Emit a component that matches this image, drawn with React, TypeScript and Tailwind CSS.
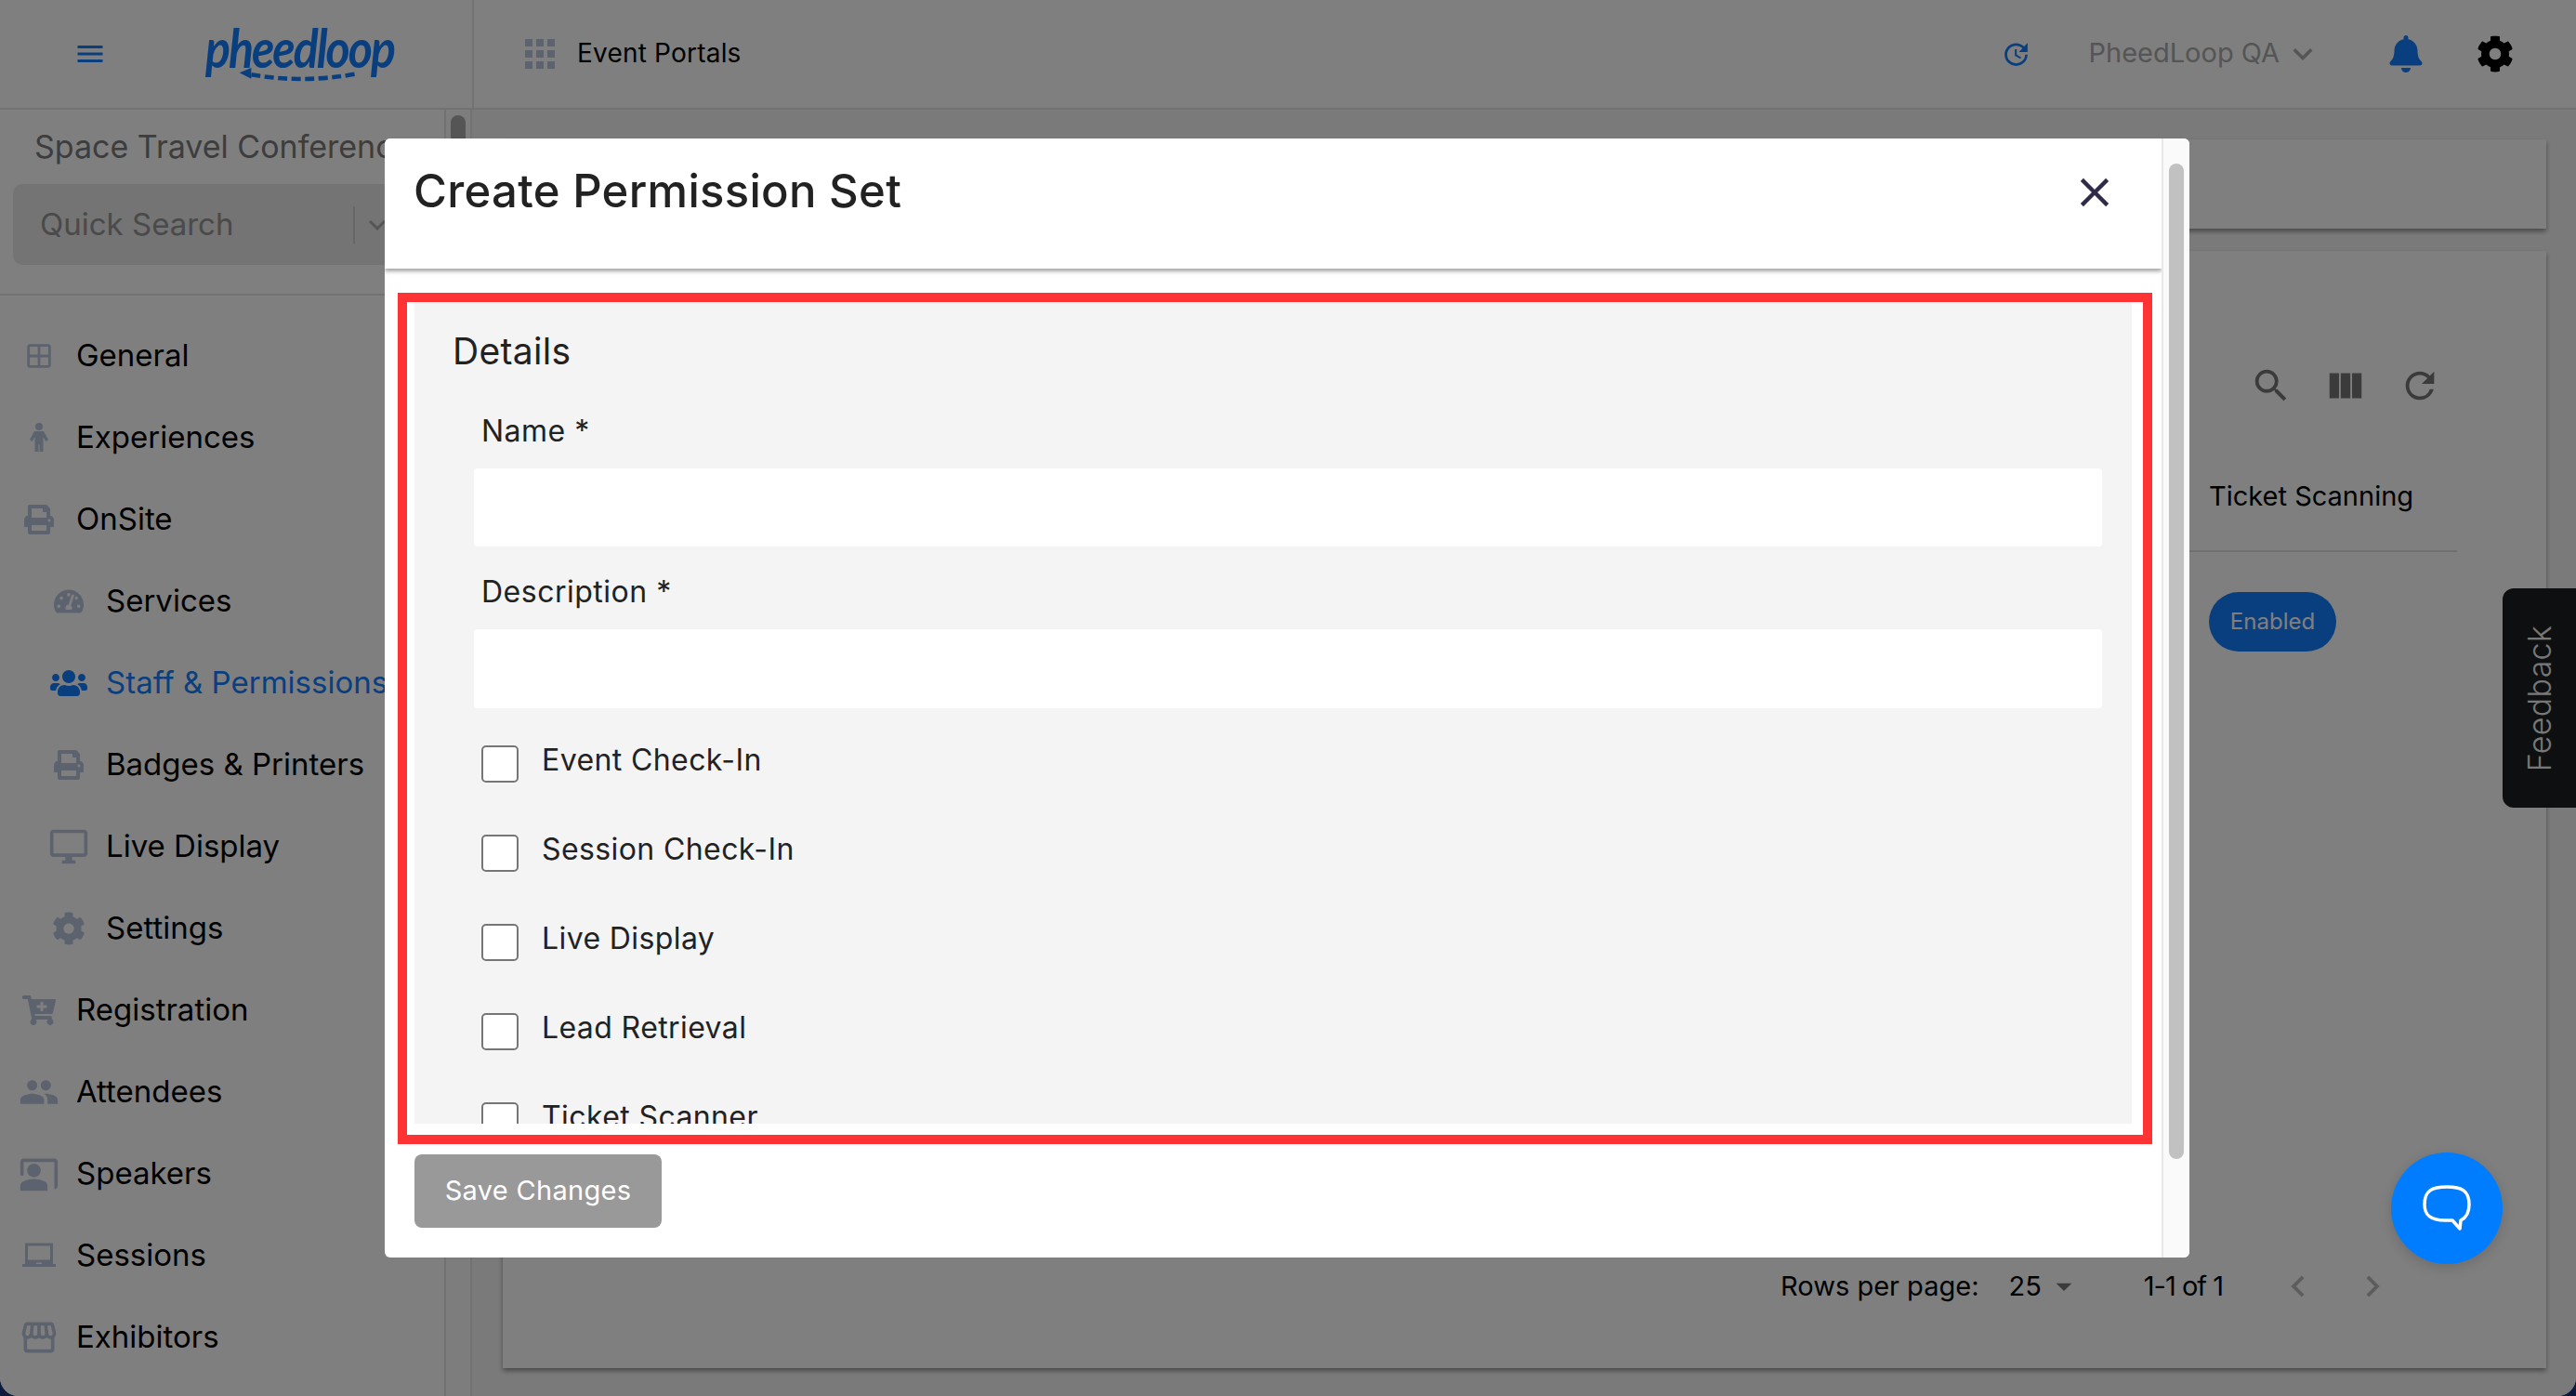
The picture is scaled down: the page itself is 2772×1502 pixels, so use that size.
import type { ReactNode } from 'react'
import { FaBell, FaCartPlus, FaCog, FaPrint, FaTachometerAlt, FaUsers } from 'react-icons/fa'
import {
  MdApps,
  MdArrowDropDown,
  MdChevronLeft,
  MdChevronRight,
  MdClose,
  MdCoPresent,
  MdKeyboardArrowDown,
  MdMenu,
  MdOutlineDesktopWindows,
  MdOutlineLaptopChromebook,
  MdOutlineStorefront,
  MdOutlineWindow,
  MdPeople,
  MdRefresh,
  MdSearch,
  MdUpdate,
  MdViewColumn,
} from 'react-icons/md'

type NavItem = {
  label: string
  icon: ReactNode
  nested?: boolean
  active?: boolean
}

const iconGray = 'text-[#b9c6dc]'

function PersonIcon() {
  return (
    <svg className={`h-[32px] w-[20px] ${iconGray}`} viewBox="0 0 20 32" fill="currentColor">
      <circle cx="10" cy="4" r="4" />
      <path d="M5 9h10l5 9-2.5 2-3-4.5V31h-4v-8h-1v8H5.5V15.5L2.5 20 0 18z" />
    </svg>
  )
}

const navItems: NavItem[] = [
  { label: 'General', icon: <MdOutlineWindow className={`size-[34px] ${iconGray}`} /> },
  { label: 'Experiences', icon: <PersonIcon /> },
  { label: 'OnSite', icon: <FaPrint className={`size-[32px] ${iconGray}`} /> },
  { label: 'Services', icon: <FaTachometerAlt className={`size-[32px] ${iconGray}`} />, nested: true },
  { label: 'Staff & Permissions', icon: <FaUsers className="size-[40px] text-[#147fff]" />, nested: true, active: true },
  { label: 'Badges & Printers', icon: <FaPrint className={`size-[32px] ${iconGray}`} />, nested: true },
  { label: 'Live Display', icon: <MdOutlineDesktopWindows className={`size-[48px] ${iconGray}`} />, nested: true },
  { label: 'Settings', icon: <FaCog className={`size-[36px] ${iconGray}`} />, nested: true },
  { label: 'Registration', icon: <FaCartPlus className={`size-[36px] ${iconGray}`} /> },
  { label: 'Attendees', icon: <MdPeople className={`size-[48px] ${iconGray}`} /> },
  { label: 'Speakers', icon: <MdCoPresent className={`size-[44px] ${iconGray}`} /> },
  { label: 'Sessions', icon: <MdOutlineLaptopChromebook className={`size-[36px] ${iconGray}`} /> },
  { label: 'Exhibitors', icon: <MdOutlineStorefront className={`size-[44px] ${iconGray}`} /> },
]

const permissions = ['Event Check-In', 'Session Check-In', 'Live Display', 'Lead Retrieval', 'Ticket Scanner']

function Logo() {
  return (
    <div className="relative h-[68px] w-[200px] text-[#147fff]">
      <span className="block origin-top scale-y-[1.15] text-center font-['Lato'] text-[50px] leading-[48px] font-bold tracking-[-2px] italic">
        pheedloop
      </span>
      <svg className="absolute bottom-0 left-[28px] h-[20px] w-[150px]" viewBox="0 0 150 22" fill="none">
        <path d="M16 9 Q75 20 142 8" stroke="currentColor" strokeWidth="5" strokeDasharray="11 5" />
        <path d="M2 7 L16 1 L16 14 Z" fill="currentColor" />
      </svg>
    </div>
  )
}

function Header() {
  return (
    <header className="flex h-[118px] shrink-0 border-b-2 border-[#e4e4e4] bg-white">
      <div className="flex w-[510px] shrink-0 items-center border-r-2 border-[#e4e4e4]">
        <MdMenu className="ml-[79px] size-[36px] text-[#147fff]" />
        <div className="ml-[106px]">
          <Logo />
        </div>
      </div>
      <div className="flex flex-1 items-center">
        <MdApps className="ml-[47px] size-[48px] text-[#b9c6dc]" />
        <span className="ml-[16px] pb-[2px] text-[28px] tracking-[0.2px] text-black">Event Portals</span>
        <MdUpdate className="ml-auto size-[33px] text-[#147fff]" />
        <span className="ml-[61px] pb-[2px] text-[29px] text-[#aaaaaa]">PheedLoop QA</span>
        <MdKeyboardArrowDown className="ml-[4px] size-[42px] text-[#aaaaaa]" />
        <FaBell className="ml-[70px] size-[40px] text-[#147fff]" />
        <FaCog className="mr-[67px] ml-[56px] size-[40px] text-black" />
      </div>
    </header>
  )
}

function Sidebar() {
  return (
    <aside className="flex w-[508px] shrink-0 overflow-hidden bg-white">
      <div className="w-[478px] shrink-0">
        <div className="px-[37px] pt-[20px] text-[34px] leading-[40px] whitespace-nowrap text-[#7a7a7a]">
          Space Travel Conference
        </div>
        <div className="mx-[14px] mt-[20px] flex h-[87px] items-center rounded-[10px] bg-[#e8e8e8] pl-[29px]">
          <span className="w-[337px] text-[33px] text-[#949494]">Quick Search</span>
          <div className="h-[40px] w-[2px] bg-[#cccccc]" />
          <MdKeyboardArrowDown className="ml-[6px] size-[36px] text-[#aaaaaa]" />
        </div>
        <div className="mt-[31px] h-[2px] bg-[#e4e4e4]" />
        <nav className="mt-[21px]">
          {navItems.map((item) => (
            <div key={item.label} className={`flex h-[88px] items-center ${item.nested ? 'pl-[52px]' : 'pl-[20px]'}`}>
              <span className="flex w-[44px] shrink-0 justify-center">{item.icon}</span>
              <span
                className={`ml-[18px] text-[33px] whitespace-nowrap ${item.active ? 'text-[#147fff]' : 'text-black'}`}
              >
                {item.label}
              </span>
            </div>
          ))}
        </nav>
      </div>
      <div className="flex-1 border-x-2 border-[#e4e4e4] bg-[#fafafa] px-[5px] pt-[6px]">
        <div className="h-[300px] rounded-full bg-[#aaaaaa]" />
      </div>
    </aside>
  )
}

function MainContent() {
  return (
    <main className="flex flex-1 flex-col gap-[24px] bg-[#f5f5f5] pt-[32px] pr-[32px] pb-[30px] pl-[33px]">
      <div className="h-[96px] shrink-0 bg-white shadow-[0_3px_5px_rgba(0,0,0,0.4)]" />
      <div className="flex flex-1 flex-col bg-white pr-[96px] shadow-[0_3px_5px_rgba(0,0,0,0.4)]">
        <div className="flex h-[245px] flex-col items-end">
          <div className="mt-[122px] mr-[17px] flex items-center gap-[34px] text-[#777777]">
            <MdSearch className="size-[46px]" />
            <MdViewColumn className="size-[46px]" />
            <MdRefresh className="size-[46px]" />
          </div>
        </div>
        <div className="ml-auto flex h-[37px] w-[267px] items-center text-[29px] text-black">Ticket Scanning</div>
        <div className="ml-auto mt-[40px] h-[2px] w-[400px] bg-[#e0e0e0]" />
        <div className="ml-auto mt-[43px] flex w-[267px]">
          <span className="flex h-[64px] w-[137px] items-center justify-center rounded-full bg-[#147fff] text-[24px] text-white">
            Enabled
          </span>
        </div>
        <div className="mt-auto mb-[65px] -mr-[96px] flex items-center pr-[164px] text-[29px] text-black">
          <span className="ml-auto">Rows per page:</span>
          <span className="ml-[32px]">25</span>
          <MdArrowDropDown className="ml-[4px] size-[40px] text-[#777777]" />
          <span className="ml-[66px] tracking-[-1px]">1-1 of 1</span>
          <MdChevronLeft className="ml-[58px] size-[46px] text-[#bbbbbb]" />
          <MdChevronRight className="ml-[34px] size-[46px] text-[#bbbbbb]" />
        </div>
      </div>
    </main>
  )
}

function PermissionModal() {
  return (
    <div className="absolute top-[149px] left-[414px] flex h-[1204px] w-[1942px] overflow-hidden rounded-[6px] bg-white text-[#222222]">
      <div className="flex w-[1912px] shrink-0 flex-col">
        <div className="flex h-[140px] shrink-0 items-start justify-between bg-white pl-[31px] shadow-[0_3px_4px_rgba(0,0,0,0.35)]">
          <h2 className="mt-[25px] text-[49px] leading-[64px] font-medium tracking-[0.3px]">Create Permission Set</h2>
          <MdClose className="mt-[32px] mr-[46px] size-[52px] text-[#2f2b46]" />
        </div>
        <div className="mt-[26px] ml-[14px] h-[916px] w-[1888px] shrink-0 border-[10px] border-[#ff3333] bg-white pr-[12px] pb-[12px] pl-[8px]">
          <div className="h-full overflow-hidden bg-[#f4f4f4] pl-[41px]">
            <div className="pt-[30px] text-[39px] leading-[46px] tracking-[0.3px]">Details</div>
            <div className="mt-[45px] pl-[31px] text-[32px] leading-[36px] tracking-[0.5px]">Name *</div>
            <div className="mt-[22px] ml-[23px] h-[84px] w-[1752px] rounded-[4px] bg-white" />
            <div className="mt-[31px] pl-[31px] text-[32px] leading-[36px] tracking-[0.5px]">Description *</div>
            <div className="mt-[22px] ml-[23px] h-[85px] w-[1752px] rounded-[4px] bg-white" />
            <div className="mt-[40px] flex flex-col gap-[56px] pl-[31px]">
              {permissions.map((name) => (
                <label key={name} className="flex items-start gap-[25px]">
                  <span className="size-[40px] shrink-0 rounded-[5px] border-2 border-[#767676] bg-white" />
                  <span className="text-[32px] leading-[32px] tracking-[0.4px]">{name}</span>
                </label>
              ))}
            </div>
          </div>
        </div>
        <button
          type="button"
          className="mt-[11px] ml-[32px] h-[79px] w-[266px] rounded-[8px] bg-[#999999] pb-[2px] text-[29px] tracking-[0.3px] text-white"
        >
          Save Changes
        </button>
      </div>
      <div className="flex-1 border-l-2 border-[#e8e8e8] bg-[#fafafa] pt-[27px] pl-[6px]">
        <div className="h-[1071px] w-[16px] rounded-full bg-[#c1c1c1]" />
      </div>
    </div>
  )
}

export default function App() {
  return (
    <div className="h-[1502px] w-[2772px] bg-[#0d1b3e] font-['Inter',sans-serif]">
      <div className="relative flex h-full flex-col overflow-hidden rounded-b-[20px]">
        <Header />
        <div className="flex min-h-0 flex-1">
          <Sidebar />
          <MainContent />
        </div>

        <div className="absolute top-[633px] right-0 flex h-[236px] w-[79px] items-center justify-center rounded-l-[12px] bg-[#1c1e22]">
          <span className="-rotate-90 text-[34px] font-light tracking-[0.3px] text-[#eeeeee]">Feedback</span>
        </div>

        <div className="absolute inset-0 bg-black/50" />
        <PermissionModal />

        <div className="absolute top-[1240px] left-[2573px] flex size-[120px] items-center justify-center rounded-full bg-[#007dff] shadow-[0_4px_14px_rgba(0,0,0,0.15)]">
          <svg className="h-[50px] w-[52px]" viewBox="0 0 52 50" fill="none" stroke="white" strokeWidth="3.5">
            <path d="M26 2C10 2 2 6 2 21C2 33 9 38 24 38H32L40 47L41 38C47 35 50 30 50 21C50 6 42 2 26 2Z" strokeLinejoin="round" />
          </svg>
        </div>
      </div>
    </div>
  )
}
